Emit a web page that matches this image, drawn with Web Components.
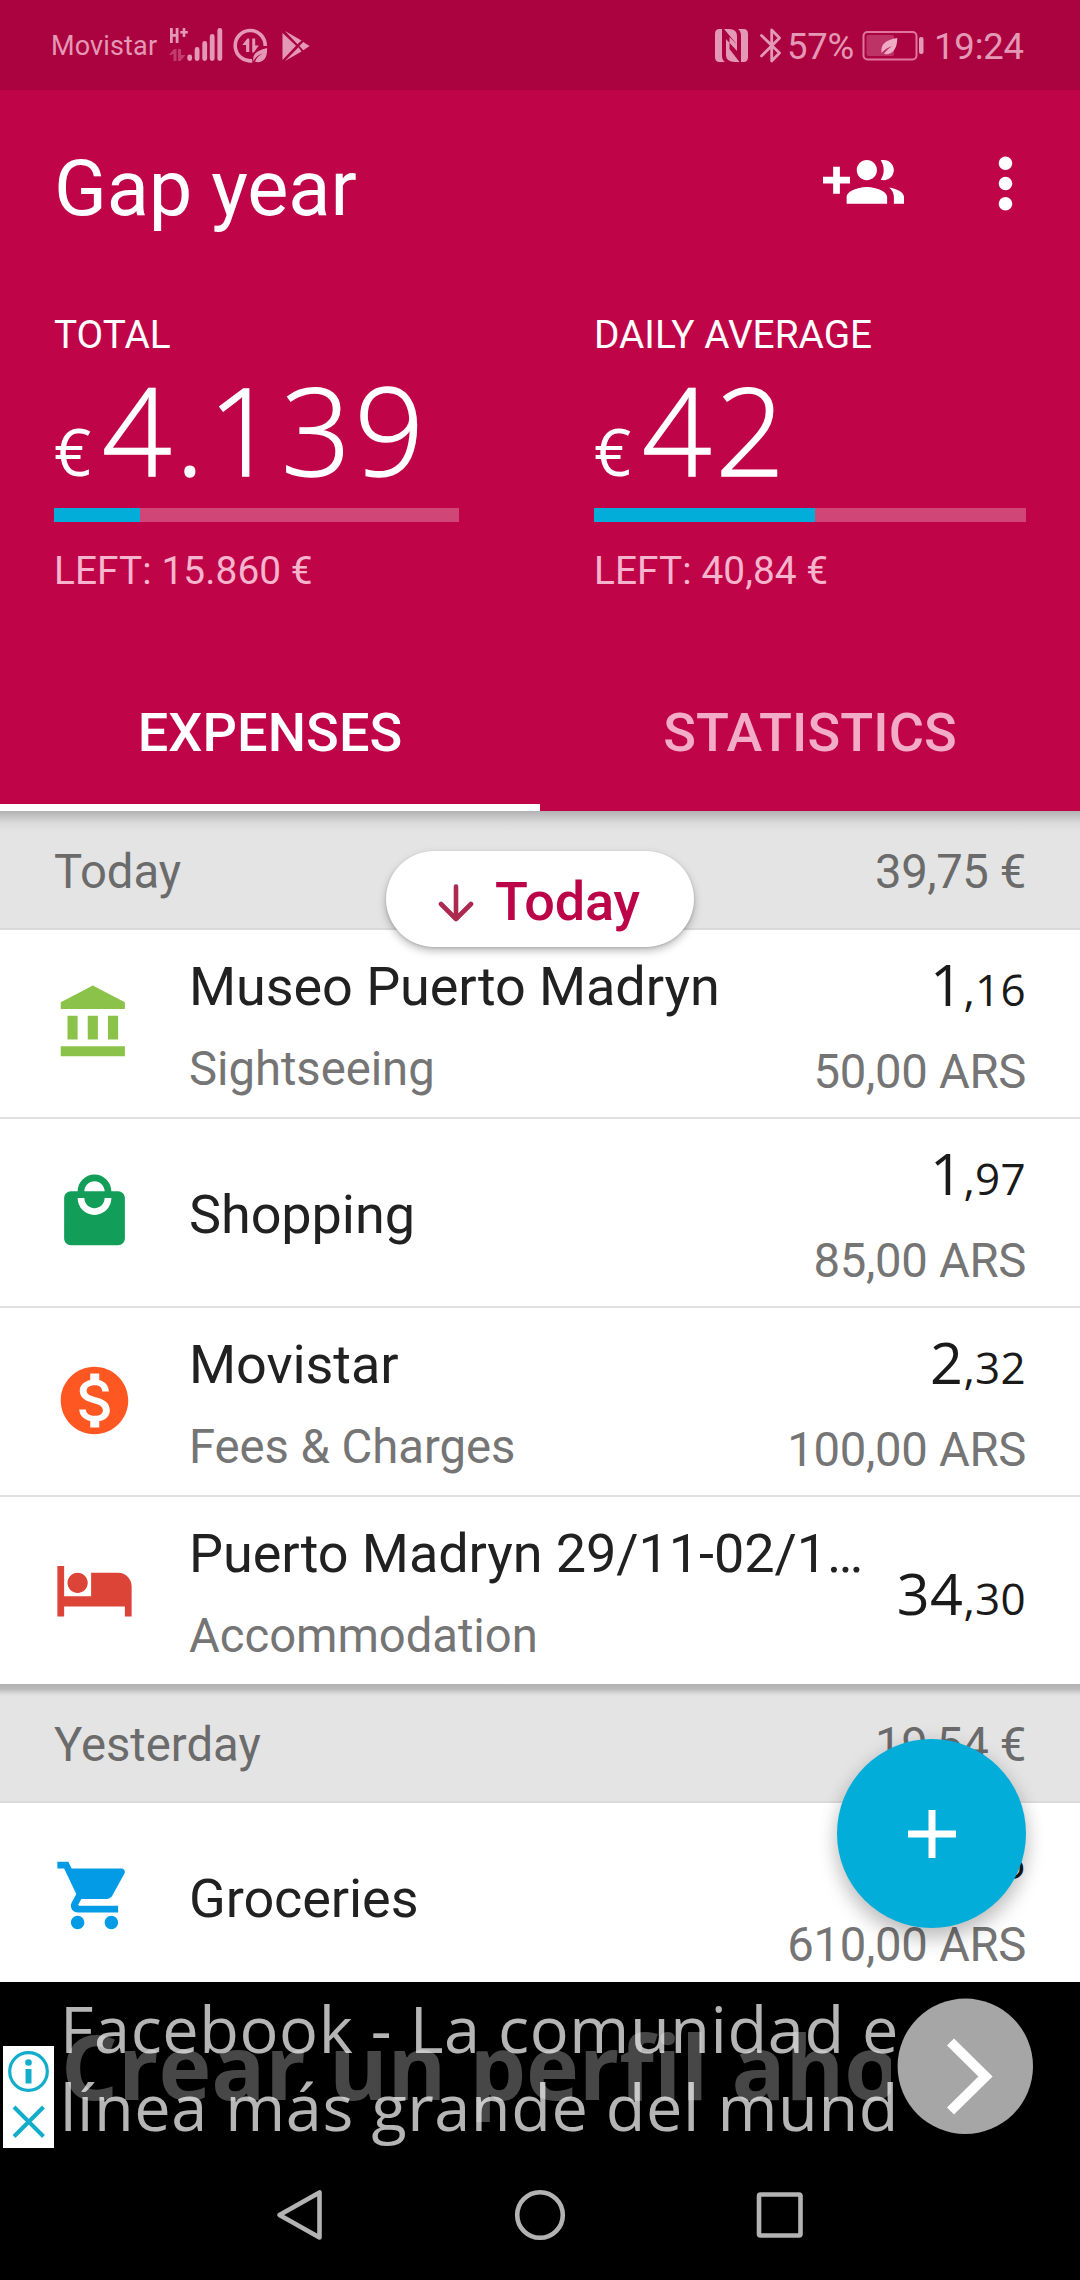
<!DOCTYPE html>
<html lang="en">
<head>
<meta charset="utf-8">
<title>Gap year</title>
<style>
  body { margin: 0; background: #000; font-family: Roboto, "Liberation Sans", sans-serif; }
</style>
</head>
<body>
<travel-app></travel-app>
<script>
const define = (name, html) => customElements.define(name, class extends HTMLElement {
  constructor() {
    super();
    const t = document.createElement('template');
    t.innerHTML = html;
    this.attachShadow({ mode: 'open' }).append(t.content.cloneNode(true));
  }
});

const ICONS = {
  museum: ['#8bc34a', 'M4 10v7h3v-7H4zm6 0v7h3v-7h-3zM2 22h19v-3H2v3zm14-12v7h3v-7h-3zm-4.500-9L2 6v2h19V6l-9.500-5z'],
  bag: ['#129d58', 'M19 6h-2c0-2.760-2.240-5-5-5S7 3.240 7 6H5c-1.100 0-1.990.9-1.990 2L3 20c0 1.100.9 2 2 2h14c1.100 0 2-.9 2-2V8c0-1.100-.9-2-2-2zm-7-3c1.660 0 3 1.340 3 3H9c0-1.660 1.340-3 3-3zm0 10c-2.760 0-5-2.240-5-5h2c0 1.660 1.340 3 3 3s3-1.340 3-3h2c0 2.760-2.240 5-5 5z'],
  money: ['#ff5722', 'M12 2C6.480 2 2 6.480 2 12s4.480 10 10 10 10-4.480 10-10S17.520 2 12 2zm1.410 16.090V20h-2.670v-1.930c-1.710-.36-3.160-1.460-3.270-3.400h1.960c.1 1.050.82 1.870 2.650 1.870 1.960 0 2.400-.98 2.400-1.590 0-.83-.44-1.610-2.670-2.140-2.480-.6-4.180-1.620-4.180-3.670 0-1.720 1.390-2.840 3.110-3.210V4h2.670v1.950c1.860.45 2.790 1.860 2.850 3.390H14.300c-.05-1.110-.64-1.870-2.220-1.870-1.500 0-2.400.68-2.400 1.640 0 .84.65 1.390 2.670 1.910s4.180 1.390 4.180 3.910c-.01 1.830-1.380 2.830-3.120 3.160z'],
  bed: ['#db4437', 'M7 13c1.660 0 3-1.340 3-3S8.660 7 7 7s-3 1.340-3 3 1.340 3 3 3zm12-6h-8v7H3V5H1v15h2v-3h18v3h2v-9c0-2.210-1.790-4-4-4z'],
  cart: ['#039be5', 'M7 18c-1.100 0-1.990.9-1.990 2S5.900 22 7 22s2-.9 2-2-.9-2-2-2zM1 2v2h2l3.600 7.590-1.350 2.450c-.16.28-.25.61-.25.96 0 1.100.9 2 2 2h12v-2H7.420c-.14 0-.25-.11-.25-.25l.03-.12.9-1.630h7.450c.75 0 1.410-.41 1.750-1.030l3.580-6.490c.08-.14.12-.31.12-.48 0-.55-.45-1-1-1H5.210l-.94-2H1zm16 16c-1.100 0-1.990.9-1.990 2s.89 2 1.990 2 2-.9 2-2-.9-2-2-2z'],
  group: ['#fff', 'M8 10H5V7H3v3H0v2h3v3h2v-3h3v-2zm10 1c1.660 0 2.990-1.340 2.990-3S19.660 5 18 5c-.32 0-.63.05-.91.14.57.81.9 1.790.9 2.860s-.34 2.040-.9 2.860c.28.09.59.14.91.14zm-5 0c1.660 0 2.990-1.340 2.990-3S14.660 5 13 5c-1.660 0-3 1.340-3 3s1.340 3 3 3zm6.620 2.160c.83.73 1.380 1.660 1.380 2.840v2h3v-2c0-1.540-2.370-2.490-4.380-2.840zM13 13c-2 0-6 1-6 3v2h12v-2c0-2-4-3-6-3z'],
  more: ['#fff', 'M12 8c1.100 0 2-.9 2-2s-.9-2-2-2-2 .9-2 2 .9 2 2 2zm0 2c-1.100 0-2 .9-2 2s.9 2 2 2 2-.9 2-2-.9-2-2-2zm0 6c-1.100 0-2 .9-2 2s.9 2 2 2 2-.9 2-2-.9-2-2-2z']
};

customElements.define('md-icon', class extends HTMLElement {
  constructor() { super(); this.attachShadow({ mode: 'open' }); }
  connectedCallback() {
    const [fill, d] = ICONS[this.getAttribute('name')];
    this.shadowRoot.innerHTML = `<style>:host{display:block;width:81px;height:81px;flex:none}svg{display:block}</style>
      <svg width="81" height="81" viewBox="0 0 24 24"><path fill="${fill}" d="${d}"/></svg>`;
  }
});

define('status-bar', `
<style>
  :host { display: flex; align-items: center; justify-content: space-between; height: 90px; box-sizing: border-box; background: #ab033f; color: #e398b5; }
  .g { display: flex; align-items: center; height: 90px; }
  svg { display: block; flex: none; }
  .op { font-size: 27px; line-height: 32px; padding: 2px 0 0 51px; width: 118px; letter-spacing: .15px; }
  .pct { font-size: 36.500px; line-height: 44px; width: 77px; margin: 4px 0 0 -2px; letter-spacing: -.3px; }
  .time { font-size: 36.500px; line-height: 44px; width: 146px; margin-top: 4px; letter-spacing: -.2px; }
</style>
<div class="g">
  <span class="op">Movistar</span>
  <svg width="145" height="90" viewBox="169 0 145 90" fill="#e398b5">
    <path d="M170 28h2.800v6h2.900v-6h2.800v15h-2.800v-6.300h-2.900V43H170zM182.700 28h2.600v3h2.500v2.500h-2.500V37h-2.600v-3.500h-2.400V31h2.400z"/>
    <path fill="#c33c70" d="M169 55l5-6h2.500v12h-3v-7h-1.500v1zM185.500 55l-5 6H178V49h3v6z"/>
    <g stroke="#e398b5" stroke-width="4.800" stroke-linecap="round"><path d="M189.700 57v1.600M197.100 49.500v9M204.700 43.500v15M212.200 36.500v22M219.800 30.500v28"/></g>
    <path d="M265.200 46a15 15.200 0 1 0 -13 14.700" fill="none" stroke="#e398b5" stroke-width="3.600"/>
    <path d="M242.300 45l5-6.500h2V52h-3.200v-7zM258.800 45.500l-5 7h-1.600V38.500h3v7z"/>
    <path d="M253.500 61.500c-1.500-8 4-11 13.500-13.500 1 10-4.500 16-12 13.800 1.500-4 4-6.500 8-8.300-4.500 1.300-8 4-9.500 8z"/>
    <path d="M282.500 33v27l13.500-14.300zM285 31l12.500 13.200 4-3.800zM298.500 47.200L285 61l16.500-9.500zM303.200 42l-3.800 4 3.900 4.300 6.300-4.300z"/>
  </svg>
</div>
<div class="g">
  <svg width="74" height="90" viewBox="715 0 74 90" fill="#e398b5">
    <path d="M719.500 29h2.500v27q0 4 3 6h-5.500q-4.500 0-4.500-5V34q0-5 4.500-5zM724 29h5q8 0 8 7v8.500zM738 29h5.500q4.500 0 4.500 5v23q0 5-4.500 5H741V36q0-5-3-7zM726 39l11 12v-6.500l-7.500-7.500v12l10 13H735q-9 0-9-7z"/>
    <path fill="none" stroke="#e398b5" stroke-width="2.800" stroke-linejoin="round" stroke-linecap="round" d="M761.500 35.500l18 17.500-7.800 8V30l7.800 8-18 18"/>
  </svg>
  <span class="pct">57%</span>
  <svg width="70" height="90" viewBox="864 0 70 90" overflow="visible">
    <rect x="863.500" y="32" width="53" height="27.500" rx="4" fill="none" stroke="#e076a0" stroke-width="2"/>
    <rect x="866.500" y="35" width="27.500" height="21" rx="2" fill="#bd3366"/>
    <rect x="919" y="37" width="4.500" height="17" rx="2" fill="#e398b5"/>
    <path fill="#efabc4" d="M881.500 53c-1-9 4-13 15.800-15 0 11-5 17.500-13.300 16 2-3.500 4.500-5.500 8.500-8-5 1.500-8 3.500-11 7z"/>
  </svg>
  <span class="time">19:24</span>
</div>`);

define('app-toolbar', `
<style>
  :host { display: flex; align-items: center; height: 196px; box-sizing: border-box; padding: 0 34px 0 54px; color: #fff; }
  h1 { flex: 1; margin: 1px 0 0; font-weight: 400; font-size: 77.600px; line-height: 92px; letter-spacing: -.15px; }
  .a { display: flex; gap: 61px; margin-bottom: 9px; }
</style>
<h1><slot></slot></h1>
<div class="a"><md-icon name="group"></md-icon><md-icon name="more"></md-icon></div>`);

customElements.define('budget-stat', class extends HTMLElement {
  constructor() { super(); this.attachShadow({ mode: 'open' }); }
  connectedCallback() {
    const a = n => this.getAttribute(n);
    this.shadowRoot.innerHTML = `
<style>
  :host { display: block; color: #fff; }
  .l { font-size: 38.800px; line-height: 46px; }
  .v { display: flex; align-items: baseline; margin-top: 6px; height: 130px; line-height: 130px; font-family: "Open Sans", "Noto Sans", sans-serif; }
  .c { font-size: 65px; width: 48px; font-weight: 400; }
  .n { font-size: 122px; font-weight: 300; letter-spacing: 3.600px; -webkit-text-stroke: 1.400px #fff; }
  .b { height: 14px; margin-top: 14px; background: #d04777; }
  .f { height: 14px; background: #03add9; }
  .r { margin-top: 26px; color: #f6b4cd; letter-spacing: .08px; }
</style>
<div class="l">${a('label')}</div>
<div class="v"><span class="c">€</span><span class="n">${a('value')}</span></div>
<div class="b"><div class="f" style="width:${a('fill')}px"></div></div>
<div class="l r">${a('left')}</div>`;
  }
});

define('tab-bar', `
<style>
  :host { display: flex; height: 151px; color: #fff; font-size: 54px; font-weight: 500; line-height: 64px; letter-spacing: .1px; }
  div { flex: 1; display: flex; align-items: center; justify-content: center; border-bottom: 7px solid transparent; padding-top: 1px; box-sizing: border-box; }
  .on { border-color: #fff; }
  .off { color: #f2acc6; }
</style>
<div class="on">EXPENSES</div><div class="off">STATISTICS</div>`);

define('day-header', `
<style>
  :host { display: flex; justify-content: space-between; align-items: center; height: 119px; box-sizing: border-box; padding: 4px 54px 0; background: #e4e4e4; border-bottom: 2px solid #dadada; color: #6b6b6b; font-size: 47.250px; line-height: 56px;
    background-image: linear-gradient(#b2b2b2, #c3c3c3 5px, #dadada 12px, #e4e4e4 20px); }
  :host([soft]) { background-image: linear-gradient(#b2b2b2, #bababa 5px, #dcdcdc 10px, #e4e4e4 13px); }
  ::slotted(span) { letter-spacing: -.4px; }
</style>
<slot></slot><slot name="sum"></slot>`);

customElements.define('expense-row', class extends HTMLElement {
  constructor() { super(); this.attachShadow({ mode: 'open' }); }
  connectedCallback() {
    const a = n => this.getAttribute(n);
    const [whole, cents] = a('amount').split(',');
    this.shadowRoot.innerHTML = `
<style>
  :host { display: flex; align-items: center; height: 189px; box-sizing: border-box; padding: 0 54px; background: #fff; border-bottom: 2px solid #e0e0e0; }
  :host([last]) { border: 0; height: 187px; }
  md-icon { margin-bottom: 2px; }
  .t { flex: 1; min-width: 0; margin: 5px 0 0 54px; white-space: nowrap; }
  .n { font-size: 54px; line-height: 64px; color: #212121; letter-spacing: -.08px; }
  .s { font-size: 47.250px; line-height: 56px; color: #757575; margin-top: 22px; letter-spacing: -.05px; }
  .r { display: flex; flex-direction: column; align-items: flex-end; margin-top: 5px; }
  .m { font-family: "Open Sans", "Noto Sans", sans-serif; font-size: 57.500px; line-height: 64px; height: 64px; color: #1a1a1a; letter-spacing: .5px; display: flex; align-items: baseline; }
  .m small { font-size: 44px; letter-spacing: .3px; }
  .r .s { margin-top: 28px; letter-spacing: -.3px; }
</style>
<md-icon name="${a('icon')}"></md-icon>
<div class="t"><div class="n">${a('name')}</div>${a('category') ? `<div class="s">${a('category')}</div>` : ''}</div>
<div class="r"><div class="m"><span>${whole}</span><small>,${cents}</small></div>${a('local') ? `<div class="s">${a('local')}</div>` : ''}</div>`;
  }
});

define('jump-pill', `
<style>
  :host { display: flex; align-items: center; position: absolute; left: 386px; top: 851px; width: 308px; height: 96px; box-sizing: border-box; padding-left: 52px; border-radius: 48px; background: #fff; box-shadow: 0 4px 8px rgba(0,0,0,.26), 0 1px 3px rgba(0,0,0,.14); color: #bb0548; font-size: 54px; font-weight: 500; line-height: 64px; }
  svg { margin: 8px 21px 0 0; display: block; }
  span { margin-top: 5px; letter-spacing: -.1px; }
</style>
<svg width="36" height="38" viewBox="0 0 36 38" fill="none" stroke="#ac2a50" stroke-width="4.600" stroke-linecap="round" stroke-linejoin="round"><path d="M18 2.500V34M3 20l15 15 15-15"/></svg>
<span><slot></slot></span>`);

define('add-button', `
<style>
  :host { display: flex; align-items: center; justify-content: center; position: absolute; left: 837px; top: 1739px; width: 189px; height: 189px; border-radius: 50%; background: #03add9; box-shadow: 0 12px 20px rgba(0,0,0,.2), 0 2px 20px rgba(0,0,0,.1); }
</style>
<svg width="48" height="48" viewBox="0 0 48 48"><path stroke="#fff" stroke-width="7" d="M24 0v48M0 24h48"/></svg>`);

define('ad-banner', `
<style>
  :host { display: grid; grid-template-columns: 59px 838px 183px; height: 172px; background: #000; font-family: "Open Sans", "Noto Sans", sans-serif; }
  .k { margin: 64px 0 0 3px; width: 51px; height: 102px; background: #fff; }
  .x { display: grid; overflow: hidden; white-space: nowrap; }
  .x > * { grid-area: 1 / 1; }
  .gh { font-size: 89.500px; font-weight: 700; line-height: 120px; margin: 23px 0 0 2px; width: 830px; overflow: hidden; color: #474747; letter-spacing: -.1px; }
  .tx { font-size: 64.800px; line-height: 78px; margin: 7px 0 0 1px; color: rgba(255,255,255,.71); letter-spacing: .6px; }
  svg { display: block; }
</style>
<div class="k"><svg width="51" height="102" viewBox="0 0 51 102" fill="none" stroke="#12adcb" stroke-width="3.200"><circle cx="25.500" cy="25.500" r="18.800"/><path stroke-width="6" d="M25.500 23v14.500"/><circle cx="25.500" cy="16.500" r="3.300" fill="#12adcb" stroke="none"/><path stroke-width="4" d="M11 61l29.500 29.500M40.500 61L11 90.500"/></svg></div>
<div class="x"><div class="gh">Crear un perfil aho</div><div class="tx">Facebook - La comunidad e<br>línea más grande del mund</div></div>
<svg width="183" height="172" viewBox="897 1982 183 172"><circle cx="965.300" cy="2066.300" r="67.700" fill="#a6a6a6"/><path fill="none" stroke="#fff" stroke-width="10" d="M950.500 2042l35 34.500-35 34.500"/></svg>`);

define('nav-bar', `
<style>
  :host { display: flex; justify-content: center; gap: 186px; align-items: center; height: 122px; background: #000; }
</style>
<svg width="54" height="54" viewBox="0 0 54 54" fill="none" stroke="#b3b3b3" stroke-width="4.600" stroke-linejoin="round"><path d="M46.500 4.500v45L6.500 27z"/></svg>
<svg width="54" height="54" viewBox="0 0 54 54" fill="none" stroke="#b3b3b3" stroke-width="4.600"><circle cx="27" cy="27" r="22.800"/></svg>
<svg width="54" height="54" viewBox="0 0 54 54" fill="none" stroke="#b3b3b3" stroke-width="4.600"><rect x="6" y="6.500" width="41.500" height="41" rx="1.500"/></svg>`);

define('travel-app', `
<style>
  :host { display: block; position: relative; width: 1080px; height: 2280px; overflow: hidden; }
  header { background: #bf0548; height: 811px; display: flex; flex-direction: column; }
  .st { display: grid; grid-template-columns: 405px 432px; gap: 135px; padding: 26px 54px 0; flex: 1; }
  main { height: 1171px; overflow: hidden; background: #fff; }
</style>
<header>
  <status-bar></status-bar>
  <app-toolbar>Gap year</app-toolbar>
  <div class="st">
    <budget-stat label="TOTAL" value="4.139" fill="86" left="LEFT: 15.860 €"></budget-stat>
    <budget-stat label="DAILY AVERAGE" value="42" fill="221" left="LEFT: 40,84 €"></budget-stat>
  </div>
  <tab-bar></tab-bar>
</header>
<main>
  <day-header>Today<span slot="sum">39,75 €</span></day-header>
  <expense-row icon="museum" name="Museo Puerto Madryn" category="Sightseeing" amount="1,16" local="50,00 ARS"></expense-row>
  <expense-row icon="bag" name="Shopping" amount="1,97" local="85,00 ARS"></expense-row>
  <expense-row icon="money" name="Movistar" category="Fees &amp;amp; Charges" amount="2,32" local="100,00 ARS"></expense-row>
  <expense-row last icon="bed" name="Puerto Madryn 29/11-02/1…" category="Accommodation" amount="34,30"></expense-row>
  <day-header soft>Yesterday<span slot="sum">19,54 €</span></day-header>
  <expense-row icon="cart" name="Groceries" amount="14,15" local="610,00 ARS"></expense-row>
</main>
<ad-banner></ad-banner>
<nav-bar></nav-bar>
<jump-pill>Today</jump-pill>
<add-button></add-button>`);
</script>
</body>
</html>
